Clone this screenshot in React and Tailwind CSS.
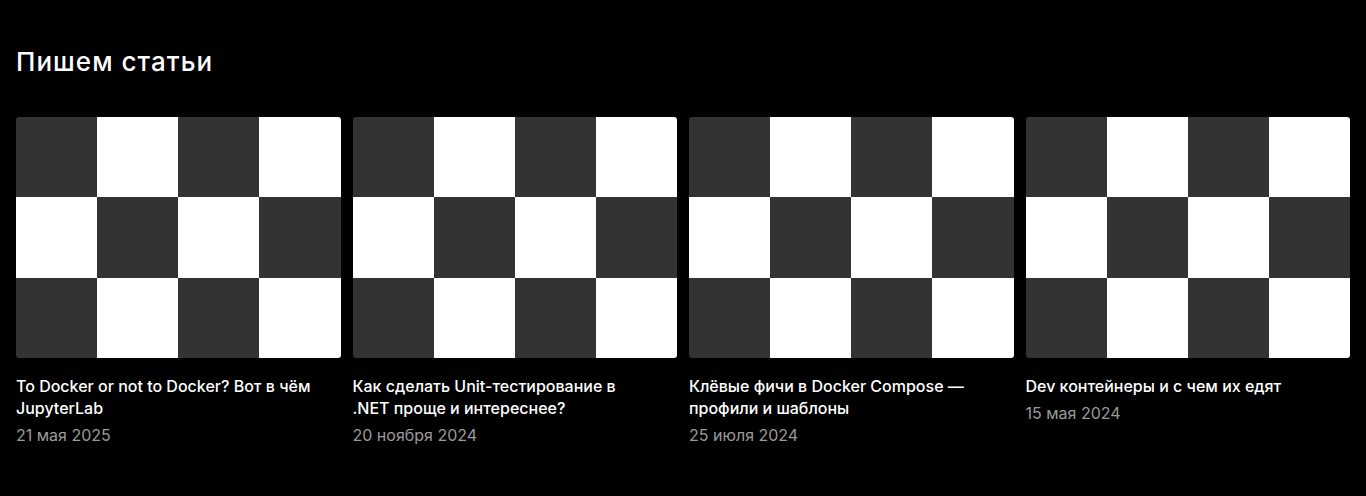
const articles = [
  { title: 'To Docker or not to Docker? Вот в чём JupyterLab', date: '21 мая 2025' },
  { title: 'Как сделать Unit-тестирование в .NET проще и интереснее?', date: '20 ноября 2024' },
  { title: 'Клёвые фичи в Docker Compose — профили и шаблоны', date: '25 июля 2024' },
  { title: 'Dev контейнеры и с чем их едят', date: '15 мая 2024' },
];

function Checker() {
  const cells = [];
  for (let r = 0; r < 3; r++) {
    for (let c = 0; c < 4; c++) {
      const dark = (r + c) % 2 === 0;
      cells.push(<div key={`${r}-${c}`} className={dark ? 'bg-[#333333]' : 'bg-white'} />);
    }
  }
  return (
    <div className="grid grid-cols-4 grid-rows-3 h-[241px] rounded-[3px] overflow-hidden">
      {cells}
    </div>
  );
}

export default function App() {
  return (
    <div className="bg-black min-h-[496px] w-full px-4 pt-[44px] text-white" style={{ fontFamily: 'Inter, "Noto Sans", sans-serif' }}>
      <h2 className="text-[26px] leading-9 font-medium tracking-[0.04em]">Пишем статьи</h2>
      <div className="grid grid-cols-4 gap-3 mt-[37px]">
        {articles.map(a => (
          <a key={a.title} href="#" className="block">
            <Checker />
            <p className="mt-[17px] text-[16px] leading-[22px] font-medium text-white pr-[26px]">{a.title}</p>
            <p className="mt-[4px] text-[16px] leading-[24px] text-[#9a9a9a]">{a.date}</p>
          </a>
        ))}
      </div>
    </div>
  );
}
